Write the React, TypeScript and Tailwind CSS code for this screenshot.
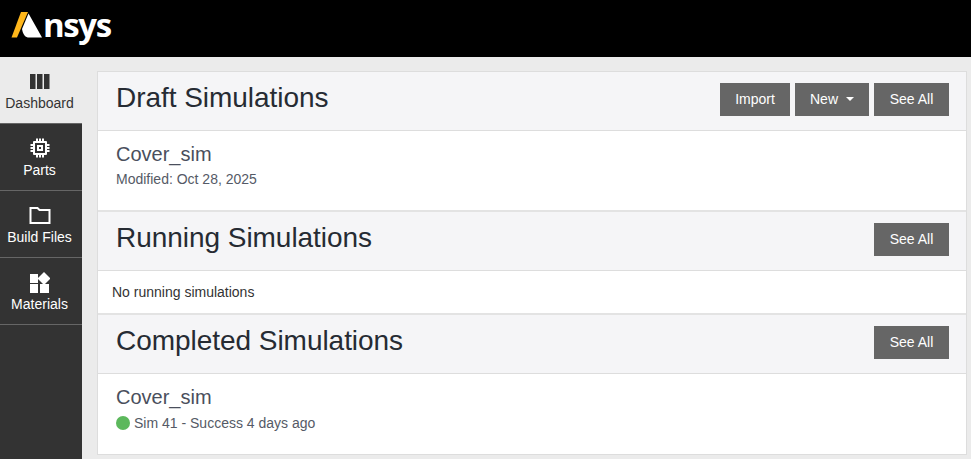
import React from "react";

const font = "font-['Liberation_Sans',Arial,sans-serif]";

function Btn({ children, w }: { children: React.ReactNode; w: string }) {
  return (
    <button className={"h-[33px] pb-[2px] bg-[#666666] text-white text-[14px] leading-none flex items-center justify-center " + w}>
      {children}
    </button>
  );
}

function SectionHead({ title, children }: { title: string; children: React.ReactNode }) {
  return (
    <div className="h-[59px] bg-[#f5f5f7] border-b border-[#dddddd] flex items-start justify-between pl-[18px] pr-[17px]">
      <h2 className="text-[28px] leading-[31px] mt-[10px] text-[#262b33] tracking-[-0.04px]">{title}</h2>
      <div className="flex gap-[5px] mt-[11px]">{children}</div>
    </div>
  );
}

function NavItem({ label, icon, active }: { label: string; icon: React.ReactNode; active?: boolean }) {
  return (
    <div
      className={
        "h-[67px] pt-[13px] flex flex-col items-center pr-[3px] text-[14px] leading-[20px] border-b border-[#666666] " +
        (active ? "bg-[#ebebeb] text-[#333333]" : "bg-[#333333] text-white")
      }
    >
      <div className="h-[22px] w-[24px] flex items-center justify-center">{icon}</div>
      <div className="mt-[1px]">{label}</div>
    </div>
  );
}

export default function App() {
  return (
    <div className={"w-[971px] h-[459px] overflow-hidden bg-[#ebebeb] flex flex-col " + font}>
      <header className="h-[57px] shrink-0 bg-black flex items-start pl-[11px] pt-[5px]">
        <svg width="32" height="27" viewBox="0 0 32 27" className="mt-[7px] shrink-0">
          <polygon points="0.5,25.5 6,25.5 17,0 10,0" fill="#ffb71b" />
          <path d="M17.5 1.5 31 25.5H18C14.5 25.5 12 23 11 17Z" fill="#ffffff" />
        </svg>
        <span className="text-white text-[33px] leading-[40px] font-bold font-['Open_Sans',sans-serif] tracking-[-1.4px]">nsys</span>
      </header>
      <div className="flex flex-1 min-h-0">
        <aside className="w-[82px] shrink-0 bg-[#333333] flex flex-col">
          <NavItem
            active
            label="Dashboard"
            icon={
              <svg width="20" height="15" viewBox="0 0 20 15">
                <rect x="0" y="0" width="5.5" height="15" fill="#333333" />
                <rect x="7" y="0" width="5.5" height="15" fill="#333333" />
                <rect x="14" y="0" width="5.5" height="15" fill="#333333" />
              </svg>
            }
          />
          <NavItem
            label="Parts"
            icon={
              <svg width="20" height="20" viewBox="0 0 20 20" fill="#ffffff">
                <path fillRule="evenodd" d="M4 3h12a1 1 0 0 1 1 1v12a1 1 0 0 1-1 1H4a1 1 0 0 1-1-1V4a1 1 0 0 1 1-1Zm1 2v10h10V5H5Z" />
                <path fillRule="evenodd" d="M7 7h6v6H7Zm2 2v2h2V9Z" />
                <rect x="6" y="0.5" width="2" height="2.5" /><rect x="9" y="0.5" width="2" height="2.5" /><rect x="12" y="0.5" width="2" height="2.5" />
                <rect x="6" y="17" width="2" height="2.5" /><rect x="9" y="17" width="2" height="2.5" /><rect x="12" y="17" width="2" height="2.5" />
                <rect x="0.5" y="6" width="2.5" height="2" /><rect x="0.5" y="9" width="2.5" height="2" /><rect x="0.5" y="12" width="2.5" height="2" />
                <rect x="17" y="6" width="2.5" height="2" /><rect x="17" y="9" width="2.5" height="2" /><rect x="17" y="12" width="2.5" height="2" />
              </svg>
            }
          />
          <NavItem
            label="Build Files"
            icon={
              <svg width="22" height="17" viewBox="0 0 22 17" fill="none" stroke="#ffffff" strokeWidth="2">
                <path d="M1.5 1h7l2 2h10v13h-19Z" />
              </svg>
            }
          />
          <NavItem
            label="Materials"
            icon={
              <svg width="20" height="21" viewBox="0 0 20 21" fill="#ffffff">
                <rect x="0" y="2" width="8" height="9" />
                <polygon points="14,0 20.5,6.5 14,13 7.5,6.5" />
                <rect x="0" y="12" width="8" height="9" />
                <rect x="10" y="12" width="9" height="9" />
              </svg>
            }
          />
        </aside>
        <main className="flex-1 pl-[15px] pr-[4px] pt-[14px]">
          <div className="border border-[#dddddd] bg-white h-[384px] flex flex-col">
            <SectionHead title="Draft Simulations">
              <Btn w="w-[70px]">Import</Btn>
              <Btn w="w-[74px]">
                New
                <span className="ml-[8px] w-0 h-0 border-x-[4px] border-x-transparent border-t-[4px] border-t-white" />
              </Btn>
              <Btn w="w-[75px]">See All</Btn>
            </SectionHead>
            <div className="h-[81px] pl-[18px] pt-[11px] border-b-2 border-[#e3e3e3]">
              <div className="text-[20px] leading-[24px] text-[#4a4f5c]">Cover_sim</div>
              <div className="text-[14px] leading-[20px] mt-[3px] text-[#555a66]">Modified: Oct 28, 2025</div>
            </div>
            <SectionHead title="Running Simulations">
              <Btn w="w-[75px]">See All</Btn>
            </SectionHead>
            <div className="h-[44px] pl-[14px] pt-[11px] text-[14px] leading-[20px] text-[#333333] border-b-2 border-[#e3e3e3]">
              No running simulations
            </div>
            <SectionHead title="Completed Simulations">
              <Btn w="w-[75px]">See All</Btn>
            </SectionHead>
            <div className="flex-1 pl-[18px] pt-[11px]">
              <div className="text-[20px] leading-[24px] text-[#4a4f5c]">Cover_sim</div>
              <div className="text-[14px] leading-[20px] mt-[4px] text-[#555a66] flex items-center">
                <span className="w-[14px] h-[14px] rounded-full bg-[#5cb85c] mr-[4px]" />
                Sim 41 - Success 4 days ago
              </div>
            </div>
          </div>
        </main>
      </div>
    </div>
  );
}
